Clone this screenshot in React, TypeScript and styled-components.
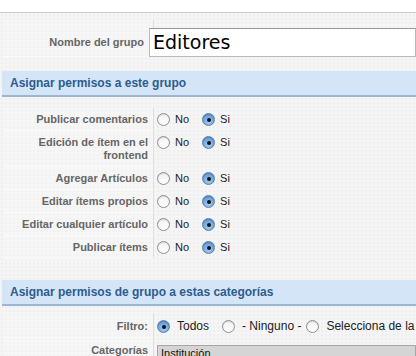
import styled, { createGlobalStyle } from "styled-components";

const GlobalStyle = createGlobalStyle`
  html, body {
    margin: 0;
    padding: 0;
    background: #ffffff;
    overflow: hidden;
  }
  body {
    font-family: "Liberation Sans", Arial, sans-serif;
  }
`;

const Page = styled.div`
  width: 416px;
  height: 356px;
  padding-top: 12px;
  box-sizing: border-box;
  overflow: hidden;
`;

const Panel = styled.div`
  height: 100%;
  border-top: 1px solid #c9c9c9;
  background-color: #f5f5f5;
  background-image: radial-gradient(#e6e6e6 0.6px, transparent 0.8px);
  background-size: 4px 4px;
  padding: 7px 0 0 0;
  box-sizing: border-box;
`;

const Table = styled.div<{ $top?: number }>`
  padding-left: 4px;
  margin-top: ${({ $top }) => $top ?? 0}px;
`;

const Row = styled.div`
  display: grid;
  grid-template-columns: 150px 1fr;
  align-items: stretch;
`;

const LabelCell = styled.div<{ $padTop?: number; $padRight?: number }>`
  box-sizing: border-box;
  display: flex;
  justify-content: flex-end;
  align-items: flex-start;
  text-align: right;
  padding: ${({ $padTop }) => $padTop ?? 5}px ${({ $padRight }) => $padRight ?? 5}px 4px 0;
  border-right: 1px solid #dedede;
  border-bottom: 1px solid #fbfbfb;
  background: rgba(250, 250, 250, 0.35);
  font-size: 11px;
  line-height: 13px;
  font-weight: bold;
  color: #666666;
`;

const ValueCell = styled.div<{ $padTop?: number }>`
  display: flex;
  align-items: flex-start;
  padding: ${({ $padTop }) => $padTop ?? 5}px 0 0 3px;
  min-width: 0;
  white-space: nowrap;
`;

const NameInput = styled.div`
  position: relative;
  box-sizing: border-box;
  height: 29px;
  width: 300px;
  margin-top: 8px;
  margin-left: -8px;
  padding: 1px 0 0 3px;
  background: #ffffff;
  border: 1px solid #b9b9b9;
  border-top-color: #9a9a9a;
  font-family: "DejaVu Sans", Verdana, sans-serif;
  font-size: 19px;
  line-height: 25px;
  color: #000000;
`;

const SectionHeader = styled.div<{ $top: number }>`
  margin: ${({ $top }) => $top}px 0 0 2px;
  height: 24px;
  padding-left: 8px;
  display: flex;
  align-items: center;
  background: #d5e5f8;
  border-bottom: 2px solid #9cb5d4;
  font-size: 12px;
  font-weight: bold;
  color: #2d5c8e;
`;

const Option = styled.label<{ $gap: number; $after: number }>`
  display: flex;
  align-items: center;
  gap: ${({ $gap }) => $gap}px;
  margin-right: ${({ $after }) => $after}px;
  font-size: ${({ $gap }) => ($gap > 5 ? 12 : 11)}px;
  line-height: 13px;
  color: #222222;
`;

const RadioDot = styled.span<{ $on: boolean }>`
  box-sizing: border-box;
  width: 13px;
  height: 13px;
  border-radius: 50%;
  flex: none;
  position: relative;
  border: 1px solid ${({ $on }) => ($on ? "#5b7ea8" : "#8e8e8e")};
  background: ${({ $on }) =>
    $on
      ? "radial-gradient(circle at 50% 70%, #a9cdf3 0%, #6ea3dc 60%, #4f86c6 100%)"
      : "linear-gradient(#f2f2f2, #ffffff)"};
  box-shadow: inset 0 1px 1px rgba(0, 0, 0, 0.12);

  &::after {
    content: "";
    display: ${({ $on }) => ($on ? "block" : "none")};
    position: absolute;
    left: 50%;
    top: 50%;
    width: 4px;
    height: 4px;
    margin: -2px 0 0 -2px;
    border-radius: 50%;
    background: #111111;
  }
`;

const SelectBox = styled.div`
  box-sizing: border-box;
  width: 300px;
  height: 30px;
  margin-top: 2px;
  border: 1px solid #a5a5a5;
  background: #ffffff;
`;

const SelectOption = styled.div`
  background: #d5d5d5;
  padding-left: 3px;
  font-size: 11px;
  line-height: 14px;
  color: #111111;
`;

const permissions = [
  "Publicar comentarios",
  "Edición de ítem en el frontend",
  "Agregar Artículos",
  "Editar ítems propios",
  "Editar cualquier artículo",
  "Publicar ítems",
];

type RadioProps = { label: string; on: boolean; gap: number; after: number };

const Radio = ({ label, on, gap, after }: RadioProps) => (
  <Option $gap={gap} $after={after}>
    <RadioDot $on={on} />
    <span>{label}</span>
  </Option>
);

const App = () => (
  <>
    <GlobalStyle />
    <Page>
      <Panel>
        <Table>
          <Row>
            <LabelCell $padTop={16} $padRight={9}>
              Nombre del grupo
            </LabelCell>
            <ValueCell $padTop={0}>
              <NameInput>Editores</NameInput>
            </ValueCell>
          </Row>
        </Table>

        <SectionHeader $top={14}>Asignar permisos a este grupo</SectionHeader>

        <Table $top={11}>
          {permissions.map((name) => (
            <Row key={name}>
              <LabelCell>
                {name === "Edición de ítem en el frontend" ? (
                  <span>
                    Edición de ítem en el
                    <br />
                    frontend
                  </span>
                ) : (
                  name
                )}
              </LabelCell>
              <ValueCell>
                <Radio label="No" on={false} gap={5} after={13} />
                <Radio label="Si" on gap={5} after={0} />
              </ValueCell>
            </Row>
          ))}
        </Table>

        <SectionHeader $top={21}>
          Asignar permisos de grupo a estas categorías
        </SectionHeader>

        <Table $top={7}>
          <Row>
            <LabelCell $padTop={7}>Filtro:</LabelCell>
            <ValueCell $padTop={7}>
              <Radio label="Todos" on gap={7} after={13} />
              <Radio label="- Ninguno -" on={false} gap={7} after={5} />
              <Radio label="Selecciona de la lista" on={false} gap={7} after={0} />
            </ValueCell>
          </Row>
          <Row>
            <LabelCell $padTop={6}>Categorías</LabelCell>
            <ValueCell $padTop={5}>
              <SelectBox>
                <SelectOption>Institución</SelectOption>
              </SelectBox>
            </ValueCell>
          </Row>
        </Table>
      </Panel>
    </Page>
  </>
);

export default App;
